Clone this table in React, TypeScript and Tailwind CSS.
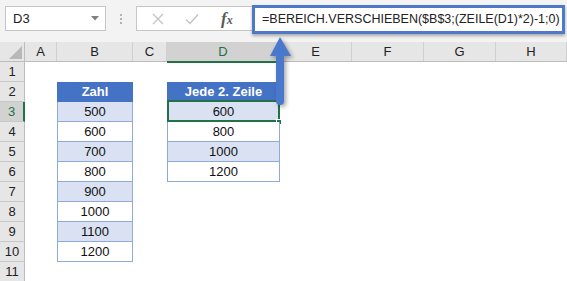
import React from "react"

const columns = [
  { key: "A", w: "w-[32px]" },
  { key: "B", w: "w-[76px]" },
  { key: "C", w: "w-[34px]" },
  { key: "D", w: "w-[113px]" },
  { key: "E", w: "w-[72px]" },
  { key: "F", w: "w-[72px]" },
  { key: "G", w: "w-[72px]" },
  { key: "H", w: "w-[71px]" },
]

const zahl = [500, 600, 700, 800, 900, 1000, 1100, 1200]
const jede = [600, 800, 1000, 1200]

function Toolbar() {
  return (
    <div className="h-[42px] bg-[#f3f3f3] flex items-start">
      {/* name box */}
      <div className="ml-[5px] mt-[6px] w-[101px] h-[25px] bg-white border border-[#c6c6c6] flex items-center justify-between pl-[7px] pr-[6px]">
        <span className="text-[13px] text-[#222]">D3</span>
        <svg width="8" height="5" viewBox="0 0 8 5">
          <polygon points="0,0 8,0 4,4.5" fill="#808080" />
        </svg>
      </div>
      <div className="w-[30px] h-[37px] flex flex-col items-center justify-center gap-[2px] pt-[1px]">
        <span className="w-[2px] h-[2px] bg-[#b3b3b3]" />
        <span className="w-[2px] h-[2px] bg-[#b3b3b3]" />
        <span className="w-[2px] h-[2px] bg-[#b3b3b3]" />
      </div>
      {/* cancel / enter / insert function */}
      <div className="mt-[6px] w-[118px] h-[25px] bg-white border border-[#c6c6c6] flex items-center">
        <svg className="ml-[15px]" width="12" height="12" viewBox="0 0 12 12">
          <path d="M1 1 L11 11 M11 1 L1 11" stroke="#c4c4c4" strokeWidth="1.3" fill="none" />
        </svg>
        <svg className="ml-[21px]" width="14" height="12" viewBox="0 0 14 12">
          <path d="M1 6.5 L5 10.5 L13 1.5" stroke="#c4c4c4" strokeWidth="1.5" fill="none" />
        </svg>
        <span
          className="ml-[22px] text-[17px] italic font-bold text-[#5a5a5a] leading-none"
          style={{ fontFamily: '"Liberation Serif", serif' }}
        >
          f<span className="text-[12px]">x</span>
        </span>
      </div>
      {/* formula bar */}
      <div className="-ml-[2px] mt-[5px] w-[313px] h-[29px] bg-white border-[3px] border-[#4e78c8] shadow-[0_2px_3px_rgba(0,0,0,0.3)] flex items-center pl-[7px]">
        <span className="text-[12.5px] text-[#222] whitespace-nowrap">=BEREICH.VERSCHIEBEN($B$3;(ZEILE(D1)*2)-1;0)</span>
      </div>
    </div>
  )
}

function HeaderRow() {
  return (
    <div className="flex h-[20px] bg-[#e6e6e6] border-b border-[#bdbdbd]">
      <div className="w-[25px] h-full relative border-r border-[#bdbdbd]">
        <svg className="absolute right-[2px] bottom-[2px]" width="13" height="13" viewBox="0 0 13 13">
          <polygon points="13,0 13,13 0,13" fill="#b8b8b8" />
        </svg>
      </div>
      {columns.map((c) =>
        c.key === "D" ? (
          <div
            key={c.key}
            className={`${c.w} h-[21px] bg-[#d2d2d2] border-r border-[#c6c6c6] border-b-2 border-b-[#217346] flex items-center justify-center text-[13px] text-[#217346]`}
          >
            {c.key}
          </div>
        ) : (
          <div
            key={c.key}
            className={`${c.w} h-full border-r border-[#d0d0d0] flex items-center justify-center text-[13px] text-[#222]`}
          >
            {c.key}
          </div>
        )
      )}
    </div>
  )
}

function bandClass(i: number) {
  return i % 2 === 0 ? "bg-[#d9e1f2]" : "bg-white"
}

function Row({ n }: { n: number }) {
  const selected = n === 3
  const bIndex = n - 3
  const dIndex = n - 3

  return (
    <div className="flex h-[20px]">
      <div
        className={
          selected
            ? "w-[25px] h-full bg-[#d2d2d2] border-b border-[#c8c8c8] border-r-2 border-r-[#217346] flex items-center justify-center text-[13px] text-[#217346]"
            : "w-[25px] h-full bg-[#e6e6e6] border-b border-[#c8c8c8] border-r border-r-[#bdbdbd] flex items-center justify-center text-[13px] text-[#222]"
        }
      >
        {n}
      </div>
      <div className="w-[32px]" />

      {/* column B: Zahl */}
      {n === 2 ? (
        <div className="w-[76px] h-full bg-[#4472c4] border-x border-[#4472c4] flex items-center justify-center text-[13px] font-bold text-white">
          Zahl
        </div>
      ) : n >= 3 && n <= 10 ? (
        <div
          className={`w-[76px] h-full ${bandClass(bIndex)} border-x border-b border-[#8eaadb] flex items-center justify-center text-[13px] text-[#111]`}
        >
          {zahl[bIndex]}
        </div>
      ) : (
        <div className="w-[76px]" />
      )}

      <div className="w-[34px]" />

      {/* column D: Jede 2. Zeile */}
      {n === 2 ? (
        <div className="w-[113px] h-full bg-[#4472c4] border-x border-[#4472c4] flex items-center justify-center text-[13px] font-bold text-white">
          Jede 2. Zeile
        </div>
      ) : n >= 3 && n <= 6 ? (
        <div
          className={`w-[113px] h-full relative ${bandClass(dIndex)} border-x border-b border-[#8eaadb] flex items-center justify-center text-[13px] text-[#111]`}
        >
          {jede[dIndex]}
          {selected && (
            <>
              <div className="absolute -left-[1px] -top-[2px] -right-[1px] -bottom-[1px] border-2 border-[#217346]" />
              <div className="absolute -right-[3px] -bottom-[4px] w-[6px] h-[6px] bg-[#217346] border border-white" />
            </>
          )}
        </div>
      ) : (
        <div className="w-[113px]" />
      )}
    </div>
  )
}

function Arrow() {
  return (
    <svg
      className="absolute left-[262px] top-[30px] drop-shadow-[2px_2px_2px_rgba(0,0,0,0.35)]"
      width="40"
      height="80"
      viewBox="0 0 40 80"
    >
      <polygon points="18,7 8,26 29,26" fill="#4a78cc" />
      <path d="M14 24 H22 V71 Q22 75 18 75 Q14 75 14 71 Z" fill="#4a78cc" />
    </svg>
  )
}

export default function App() {
  const rows = Array.from({ length: 11 }, (_, i) => i + 1)

  return (
    <div
      className="w-[567px] h-[281px] bg-white relative overflow-hidden"
      style={{ fontFamily: '"Liberation Sans", Arial, sans-serif' }}
    >
      <Toolbar />
      <HeaderRow />
      {rows.map((n) => (
        <Row key={n} n={n} />
      ))}
      <Arrow />
    </div>
  )
}
